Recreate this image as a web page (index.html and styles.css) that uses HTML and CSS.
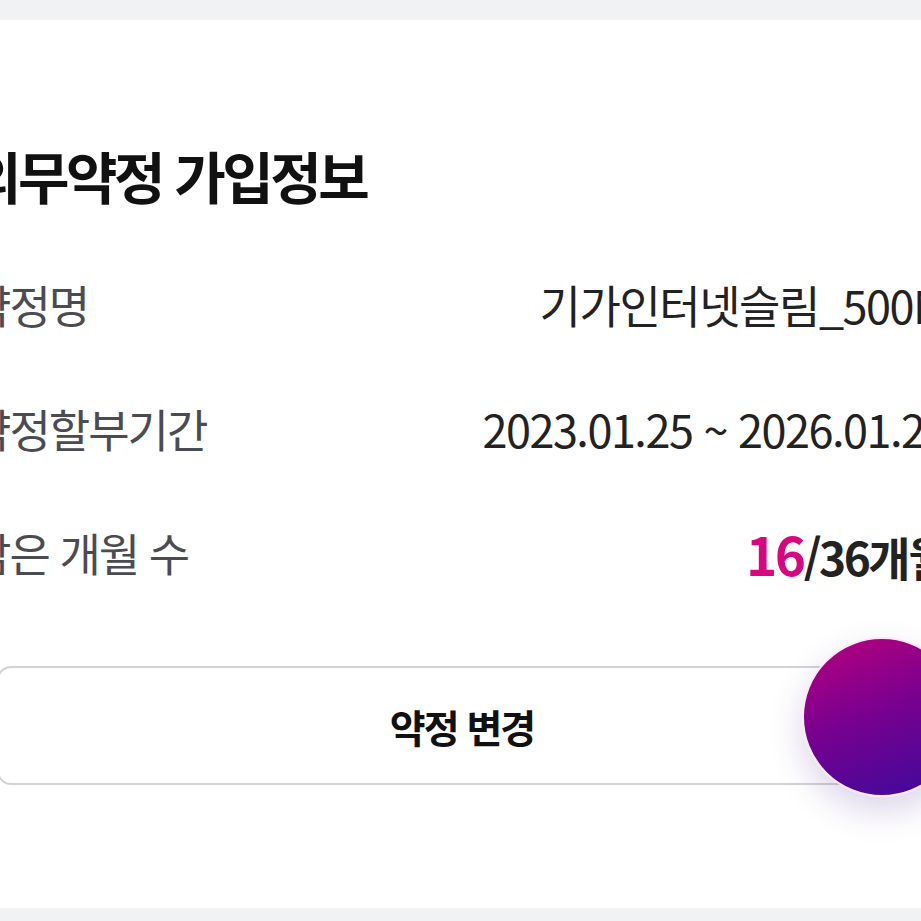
FILE: index.html
```html
<!DOCTYPE html>
<html lang="ko">
<head>
<meta charset="utf-8">
<link rel="stylesheet" href="styles.css">
</head>
<body>
<div class="card">
  <h1 class="title">의무약정 가입정보</h1>
  <div class="rows">
    <div class="row">
      <span class="label">약정명</span>
      <span class="value">기가인터넷슬림_500M</span>
    </div>
    <div class="row">
      <span class="label">약정할부기간</span>
      <span class="value">2023.01.25 ~ 2026.01.24</span>
    </div>
    <div class="row">
      <span class="label">남은 개월 수</span>
      <span class="value strong"><em class="hl">16</em>/36개월</span>
    </div>
  </div>
  <div class="btn-wrap">
    <button class="btn">약정 변경</button>
  </div>
  <div class="fab"></div>
</div>
</body>
</html>
```
FILE: styles.css
```css
html, body {
  margin: 0;
  padding: 0;
}
body {
  background: #f1f2f4;
  overflow: hidden;
  width: 921px;
  height: 921px;
  font-family: "Noto Sans CJK KR", "Noto Sans", sans-serif;
}
.card {
  position: relative;
  margin-top: 20px;
  margin-left: -30px;
  width: 978px;
  height: 888px;
  background: #fff;
  box-sizing: border-box;
  padding: 0;
}
.title {
  margin: 0;
  padding-top: 117px;
  font-size: 56px;
  line-height: 76px;
  font-weight: 700;
  color: #111;
  letter-spacing: -3.5px;
}
.rows {
  margin-top: 61px;
  display: flex;
  flex-direction: column;
  gap: 63px;
}
.row {
  display: flex;
  justify-content: space-between;
  align-items: center;
  height: 61px;
}
.label {
  font-size: 45px;
  color: #4b4c52;
  letter-spacing: -2px;
}
.value {
  font-size: 45px;
  color: #222;
  letter-spacing: -1.5px;
}
.value.strong {
  font-size: 46px;
  font-weight: 700;
  letter-spacing: -2.5px;
}
.hl {
  font-style: normal;
  font-size: 53px;
  font-weight: 700;
  color: #d8077f;
}
.btn-wrap {
  margin-top: 83px;
  padding-left: 27px;
}
.btn {
  display: flex;
  align-items: center;
  justify-content: center;
  width: 930px;
  height: 119px;
  background: #fff;
  border: 2px solid #d3d3d6;
  border-radius: 14px;
  font-family: inherit;
  font-size: 39px;
  font-weight: 700;
  color: #111;
  letter-spacing: -2px;
  padding: 0;
}
.fab {
  position: absolute;
  left: 832px;
  top: 617px;
  width: 156px;
  height: 156px;
  border-radius: 50%;
  border: 2px solid #fbe8f6;
  background: linear-gradient(160deg, #b8007d 0%, #7a008f 45%, #3b0a9c 100%);
  box-shadow: 0 14px 34px rgba(60, 20, 120, 0.18);
}
```
